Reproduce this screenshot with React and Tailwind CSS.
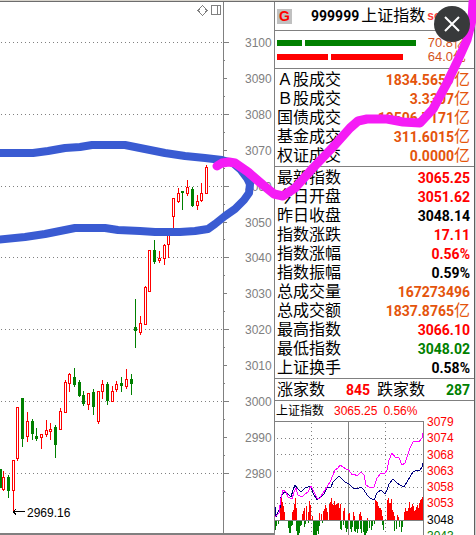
import { useState } from "react";
import clsx from "clsx";

// Candles: [x, up, high, low, body top, body bottom]
const candles = [
  [0, false, 469, 487, 469, 487],
  [3, true, 471, 490, 477, 489],
  [8, false, 475, 497, 477, 490],
  [13, true, 460, 511, 460, 490],
  [17, true, 407, 460, 407, 458],
  [22, false, 398, 446, 398, 438],
  [27, true, 412, 441, 421, 436],
  [32, false, 419, 439, 421, 433],
  [36, false, 428, 440, 436, 438],
  [41, true, 434, 448, 434, 437],
  [46, true, 420, 436, 430, 434],
  [50, true, 423, 439, 429, 431],
  [55, false, 425, 457, 427, 444],
  [60, true, 408, 429, 411, 429],
  [65, true, 380, 412, 382, 412],
  [69, true, 373, 391, 374, 383],
  [74, false, 368, 386, 377, 384],
  [79, false, 380, 396, 382, 395],
  [83, false, 391, 405, 395, 403],
  [88, true, 393, 409, 393, 404],
  [93, false, 389, 414, 392, 406],
  [98, true, 391, 423, 391, 421],
  [102, true, 380, 398, 384, 391],
  [107, false, 382, 404, 384, 400],
  [112, true, 386, 401, 391, 401],
  [116, true, 381, 391, 384, 389],
  [121, false, 377, 391, 383, 385],
  [126, true, 369, 388, 379, 386],
  [131, false, 374, 394, 379, 383],
  [135, false, 299, 347, 327, 330],
  [140, true, 316, 334, 323, 332],
  [145, true, 286, 324, 287, 324],
  [149, true, 250, 291, 250, 291],
  [154, false, 240, 263, 250, 261],
  [159, true, 251, 262, 258, 260],
  [164, true, 244, 264, 245, 258],
  [168, true, 228, 257, 229, 244],
  [173, true, 198, 228, 198, 216],
  [178, true, 188, 202, 193, 201],
  [182, false, 191, 209, 191, 192],
  [187, true, 180, 195, 187, 193],
  [192, false, 187, 206, 189, 205],
  [197, true, 195, 209, 201, 205],
  [201, true, 183, 201, 193, 200],
  [206, true, 165, 193, 167, 193],
];

// Price axis, from the top down
const prices = [3100, 3090, 3080, 3070, 3060, 3050, 3040, 3030, 3020, 3010, 3000, 2990, 2980];
const priceY = (price) => Math.round(42 + (3100 - price) * 3.59);

const turnover = [
  { label: "Ａ股成交", value: "1834.5659", unit: "亿", color: "text-[#e4540c]" },
  { label: "Ｂ股成交", value: "3.3307", unit: "亿", color: "text-[#e4540c]" },
  { label: "国债成交", value: "19506.7171", unit: "亿", color: "text-[#e4540c]" },
  { label: "基金成交", value: "311.6015", unit: "亿", color: "text-[#e4540c]" },
  { label: "权证成交", value: "0.0000", unit: "亿", color: "text-[#e4540c]" },
];

const quotes = [
  { label: "最新指数", value: "3065.25", color: "text-[#ff0000]" },
  { label: "今日开盘", value: "3051.62", color: "text-[#ff0000]" },
  { label: "昨日收盘", value: "3048.14", color: "text-black" },
  { label: "指数涨跌", value: "17.11", color: "text-[#ff0000]" },
  { label: "指数涨幅", value: "0.56%", color: "text-[#ff0000]" },
  { label: "指数振幅", value: "0.59%", color: "text-black" },
  { label: "总成交量", value: "167273496", color: "text-[#e4540c]" },
  { label: "总成交额", value: "1837.8765", unit: "亿", color: "text-[#e4540c]" },
  { label: "最高指数", value: "3066.10", color: "text-[#ff0000]" },
  { label: "最低指数", value: "3048.02", color: "text-[#008000]" },
  { label: "上证换手", value: "0.58%", color: "text-black" },
];

// Volume bars: [x, length]
const upBars = [
  [5, 22], [6, 25], [7, 18], [8, 14], [9, 8], [17, 8], [18, 10], [19, 16], [20, 22], [21, 12],
  [27, 6], [28, 9], [29, 12], [31, 14], [33, 8], [34, 19], [35, 15], [37, 4], [44, 7], [46, 6],
  [48, 9], [49, 11], [50, 15], [51, 12], [52, 8], [54, 16], [55, 18], [56, 22], [57, 16], [58, 15],
  [59, 19], [60, 15], [61, 16], [62, 16], [63, 17], [64, 12], [65, 16], [68, 9], [69, 12], [73, 6],
  [74, 7], [78, 8], [79, 4], [84, 6], [85, 8], [86, 4], [92, 2], [100, 20], [101, 19], [102, 18],
  [103, 14], [104, 12], [105, 12], [106, 10], [107, 4], [112, 20], [113, 22], [114, 17], [115, 17],
  [116, 21], [117, 10], [118, 8], [119, 4], [122, 5], [123, 3], [129, 8], [130, 12], [131, 9],
  [132, 9], [133, 12], [134, 18], [135, 12], [136, 13], [137, 16], [138, 14], [139, 9], [140, 10],
  [141, 13], [142, 15], [143, 12], [144, 17], [145, 20], [146, 21], [147, 23],
];

const downBars = [
  [0, 9], [1, 5], [3, 3], [13, 7], [14, 12], [15, 12], [16, 5], [17, 4], [21, 10], [22, 14],
  [23, 14], [24, 12], [25, 5], [26, 4], [29, 6], [30, 3], [33, 2], [38, 14], [39, 15], [40, 14],
  [41, 14], [42, 10], [43, 13], [44, 5], [47, 2], [65, 8], [66, 9], [68, 4], [70, 7], [71, 11],
  [72, 8], [75, 8], [76, 11], [77, 6], [79, 10], [80, 11], [81, 8], [82, 12], [83, 8], [85, 8],
  [86, 12], [88, 11], [89, 14], [90, 14], [91, 12], [92, 10], [94, 7], [96, 9], [97, 5], [99, 3],
  [107, 4], [108, 9], [119, 10], [121, 8], [124, 6], [126, 11], [127, 6],
];

const miniScale = [3079, 3074, 3068, 3063, 3058, 3053, 3048, 3043];

function CandleChart() {
  return (
    <svg viewBox="0 2 274 531" className="block w-full" shapeRendering="crispEdges">
      {prices
        .filter((price) => price % 20 === 0)
        .map((price) => (
          <line
            key={price}
            x1="1"
            x2="223"
            y1={priceY(price) + 0.5}
            y2={priceY(price) + 0.5}
            stroke="#808080"
            strokeDasharray="1 3"
          />
        ))}

      {/* axis and ticks */}
      <rect x="223" y="2" width="1" height="531" fill="#808080" />
      {prices.map((price) => (
        <g key={price} fill="#808080">
          <rect x="224" y={priceY(price)} width={price % 20 === 0 ? 5 : 3} height="1" />
          <rect x="224" y={priceY(price - 5)} width="1" height="1" />
          <text x="245" y={priceY(price) + 5} fontSize="12">
            {price}
          </text>
        </g>
      ))}

      {candles.map(([x, up, high, low, top, bottom]) => (
        <g key={x}>
          <rect x={x} y={high} width="1" height={low - high + 1} fill={up ? "#ff0000" : "#008000"} />
          {up ? (
            <rect
              x={x - 0.5}
              y={top + 0.5}
              width="2"
              height={bottom - top}
              fill="#ffffff"
              stroke="#ff0000"
            />
          ) : (
            <rect x={x - 1} y={top} width="3" height={bottom - top + 1} fill="#008000" />
          )}
        </g>
      ))}

      <path d="M13 511.5h12M13 511.5l3-2M13 511.5l3 3" fill="none" stroke="#000000" />
      <text x="27" y="517" fontSize="12">
        2969.16
      </text>

      <path d="M202.5 5.5l4.500 5-4.500 5-4.500-5z" fill="none" stroke="#808080" />
      <path d="M211.500 5.500h9v9h-9zM217.500 5.500v9" fill="none" stroke="#808080" />
    </svg>
  );
}

function StatTable({ rows }) {
  return (
    <div className="border-b border-[#808080] py-px">
      <table className="w-full">
        <tbody>
          {rows.map((row) => (
            <tr key={row.label}>
              <th
                scope="row"
                className="p-0 pl-0.5 text-left align-middle text-base leading-[19px] font-normal"
              >
                <div className="h-[19px]">{row.label}</div>
              </th>
              <td className={clsx("p-0 pr-1 align-middle", row.color)}>
                <div className="flex h-[19px] items-center justify-end">
                  <span className="font-[Roboto,sans-serif] text-sm font-bold">{row.value}</span>
                  {row.unit && <span className="text-base leading-[19px]">{row.unit}</span>}
                </div>
              </td>
            </tr>
          ))}
        </tbody>
      </table>
    </div>
  );
}

function MiniChart() {
  return (
    <svg viewBox="0 0 149 114" className="block w-full" shapeRendering="crispEdges">
      <g stroke="#808080" strokeDasharray="1 3">
        <path d="M2 17.5H148M2 33.5H148M2 50.5H148M2 66.5H148M2 82.5H148" />
        <path d="M36.5 2V114M110.5 2V114" />
      </g>
      <path d="M0 0.5H148.5V114M73.5 0V114M0 99.5H148" fill="none" stroke="#808080" />
      {upBars.map(([x, length]) => (
        <rect key={x} x={x} y={99 - length} width="1" height={length} fill="#ff0000" />
      ))}
      {downBars.map(([x, length]) => (
        <rect key={x} x={x} y="100" width="1" height={length} fill="#008000" />
      ))}
      <polyline
        fill="none"
        stroke="#000080"
        points="0,86 1,96 3,91 5,87 6,76 9,71 12,72 16,76 18,69 20,64 23,68 26,71 30,67 33,66 36,65 38,72 42,79 46,76 49,73 52,67 56,66 58,61 62,57 64,55 67,58 70,61 74,63 78,67 82,68 86,66 89,69 92,74 95,77 99,79 102,72 106,69 110,73 112,69 114,63 118,58 122,62 125,64 129,66 132,61 135,56 138,51 142,49 145,49 147,46 148,42"
      />
      <polyline
        fill="none"
        stroke="#ff00ff"
        points="0,96 4,92 6,77 8,69 11,71 13,76 17,78 19,71 21,67 23,74 27,76 30,73 33,71 36,65 39,71 42,77 45,77 48,72 52,66 55,61 58,54 60,49 63,47 65,44 68,46 71,48 74,49 77,54 79,53 82,55 86,51 89,54 91,64 94,66 99,66 102,57 106,52 110,52 112,49 114,39 117,32 120,36 124,37 127,44 130,42 132,36 135,27 138,21 141,20 144,21 147,17 148,12"
      />
    </svg>
  );
}

function Markup() {
  return (
    <svg
      viewBox="0 0 476 535"
      className="pointer-events-none absolute inset-x-0 top-0 w-full"
      fill="none"
      strokeLinecap="round"
      strokeLinejoin="round"
    >
      <path
        stroke="#3a5bd2"
        strokeWidth="8"
        d="M-4 153H33L48 151L65 148L80 147L92 145H125L135 147L145 149L165 153L185 156L205 158L222 160L233 163L241 170L247 178L250 184L249 193L244 200L235 209L225 216L215 224L208 229L195 231L180 232H155L140 231L118 230L105 228H75L60 231L45 234L25 237L-4 240"
      />
      <path
        stroke="#f51cf5"
        strokeWidth="9"
        d="M217 166L222 163L229 162L235 163L248 172L263 185L274 194L283 196L295 188L313 168L333 147L350 128L358 121L367 119H387L403 122L420 123L433 109L447 83L458 60L467 40L472 20L473 2"
      />
    </svg>
  );
}

function App() {
  const [open, setOpen] = useState(true);

  return (
    <div className="relative flex h-screen flex-col overflow-hidden bg-white font-['Liberation_Sans','Noto_Sans_CJK_SC',sans-serif] text-black">
      <div className="h-0.5 shrink-0 border-b border-[#6d6d6d] bg-[#d8d4cc]" />
      <div className="flex min-h-0 flex-1">
        <main className="min-w-0 flex-1">
          <CandleChart />
          <div className="h-0.5 bg-[#808080]" />
        </main>

        <aside className="w-50 shrink-0 border-l border-[#808080]">
          <header className="flex h-[29px] items-center border-b border-[#808080] pl-0.5">
            <span className="flex size-[15px] items-center justify-center bg-[#c0c0c0] text-sm font-bold text-[#ff0000]">
              G
            </span>
            <span className="ml-[19px] font-[Roboto,sans-serif] text-sm font-bold">999999</span>
            <h1 className="ml-0.5 text-base whitespace-nowrap">上证指数</h1>
            <span className="ml-0.5 text-xs font-bold text-[#ff4040]">sc</span>
          </header>

          <div className="flex h-[38px] flex-col justify-center border-b border-[#808080] pr-2 pl-0.5 text-[13px] leading-[14px] text-[#d4541c]">
            <div className="flex items-center justify-between">
              <div className="flex gap-[3px]">
                <div className="h-1.5 w-[25px] bg-[#008000]" />
                <div className="h-1.5 w-[111px] bg-[#008000]" />
              </div>
              <span>70.8亿</span>
            </div>
            <div className="flex items-center justify-between">
              <div className="flex gap-[3px]">
                <div className="h-1.5 w-[51px] bg-[#ff0000]" />
                <div className="h-1.5 w-[72px] bg-[#ff0000]" />
              </div>
              <span>64.0亿</span>
            </div>
          </div>

          <StatTable rows={turnover} />
          <StatTable rows={quotes} />

          <div className="flex h-[22px] items-center border-b border-[#808080] pr-1 pl-0.5 text-base leading-[21px]">
            <span>涨家数</span>
            <span className="flex-1 pr-[7px] text-right font-[Roboto,sans-serif] text-sm font-bold text-[#ff0000]">
              845
            </span>
            <span>跌家数</span>
            <span className="flex-1 text-right font-[Roboto,sans-serif] text-sm font-bold text-[#008000]">
              287
            </span>
          </div>

          <div className="flex text-xs">
            <div className="w-[149px]">
              <div className="flex h-5 items-center pl-px whitespace-nowrap">
                <h2>上证指数</h2>
                <span className="ml-2.5 text-[#ff0000]">3065.25</span>
                <span className="ml-1.5 text-[#ff0000]">0.56%</span>
              </div>
              <MiniChart />
            </div>
            <ul className="flex h-[143px] flex-col justify-between pt-[13px] pl-[3px] leading-4">
              {miniScale.map((price) => (
                <li
                  key={price}
                  className={clsx(
                    price > 3048 && "text-[#ff0000]",
                    price < 3048 && "text-[#008000]"
                  )}
                >
                  {price}
                </li>
              ))}
            </ul>
          </div>
        </aside>

        <div className="w-0.5 shrink-0 border-l border-[#606060] bg-[#d0d0d0]" />
      </div>

      {open && (
        <>
          <Markup />
          <button
            type="button"
            aria-label="关闭"
            onClick={() => setOpen(false)}
            className="absolute top-1.5 right-1.5 flex size-9 items-center justify-center rounded-full bg-[#383a3b] text-white"
          >
            <svg viewBox="0 0 36 36" className="size-9">
              <path d="M11 11l14 14M25 11l-14 14" stroke="currentColor" strokeWidth="2" />
            </svg>
          </button>
        </>
      )}
    </div>
  );
}

export default App;
